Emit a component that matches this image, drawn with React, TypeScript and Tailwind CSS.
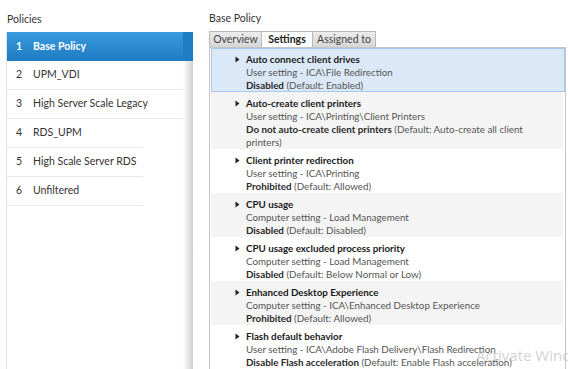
import React from 'react';

interface Policy {
    num: number;
    name: string;
}

interface Setting {
    title: string;
    path: string;
    value: string;
    def: string;
}

const policies: Policy[] = [
    { num: 1, name: 'Base Policy' },
    { num: 2, name: 'UPM_VDI' },
    { num: 3, name: 'High Server Scale Legacy' },
    { num: 4, name: 'RDS_UPM' },
    { num: 5, name: 'High Scale Server RDS' },
    { num: 6, name: 'Unfiltered' },
];

const settings: Setting[] = [
    { title: 'Auto connect client drives', path: 'User setting - ICA\\File Redirection', value: 'Disabled', def: '(Default: Enabled)' },
    { title: 'Auto-create client printers', path: 'User setting - ICA\\Printing\\Client Printers', value: 'Do not auto-create client printers', def: '(Default: Auto-create all client printers)' },
    { title: 'Client printer redirection', path: 'User setting - ICA\\Printing', value: 'Prohibited', def: '(Default: Allowed)' },
    { title: 'CPU usage', path: 'Computer setting - Load Management', value: 'Disabled', def: '(Default: Disabled)' },
    { title: 'CPU usage excluded process priority', path: 'Computer setting - Load Management', value: 'Disabled', def: '(Default: Below Normal or Low)' },
    { title: 'Enhanced Desktop Experience', path: 'Computer setting - ICA\\Enhanced Desktop Experience', value: 'Prohibited', def: '(Default: Allowed)' },
    { title: 'Flash default behavior', path: 'User setting - ICA\\Adobe Flash Delivery\\Flash Redirection', value: 'Disable Flash acceleration', def: '(Default: Enable Flash acceleration)' },
];

// Small black expander arrow
const Arrow: React.FC = () => (
    <svg width="5" height="7" viewBox="0 0 5 7" className="mt-[3px] shrink-0">
        <path d="M0.5 0.5 L4.5 3.5 L0.5 6.5 Z" fill="#222" />
    </svg>
);

const SettingRow: React.FC<{ s: Setting; index: number }> = ({ s, index }) => {
    const selected = index === 0;
    const rowClass = selected
        ? 'bg-[#dae8f8] border border-[#a8c9ec] pl-[23px] pt-[4px] pb-[0px] h-[44px]'
        : index % 2 === 1
            ? 'bg-[#f4f4f4] pl-[24px] pt-[5px] mr-[2px]'
            : 'bg-white pl-[24px] pt-[5px] mr-[2px]';
    return (
        <div className={`flex gap-[6px] ${rowClass}`}>
            <Arrow />
            <div className="w-[282px] leading-[13px]">
                <div className="font-bold text-[#1a1a1a]">{s.title}</div>
                <div className="text-[#555]">{s.path}</div>
                <div className="text-[#555]">
                    <span className="font-bold text-[#2a2a2a]">{s.value}</span> {s.def}
                </div>
            </div>
        </div>
    );
};

const App: React.FC = () => {
    return (
        <div
            className="relative w-[568px] h-[369px] overflow-hidden bg-white flex text-[10.5px] text-[#333]"
            style={{ fontFamily: 'Lato, "Noto Sans", sans-serif' }}
        >
            {/* Left column: policies list */}
            <div className="w-[193px] pl-[6px] flex flex-col shrink-0">
                <div className="h-[32px] pt-[13px] pl-[1px] leading-[13px] text-[#333]">Policies</div>
                <div className="flex-1 flex border-l border-[#e2e2e2]">
                    <div className="flex-1 flex flex-col">
                        {policies.map((p, i) => (
                            <div
                                key={p.num}
                                className={`h-[29px] flex items-center ${
                                    i === 0
                                        ? 'bg-gradient-to-b from-[#3a9be0] to-[#1d7bc2] text-white font-bold'
                                        : i < 3
                                            ? 'border-b border-[#e8e8e8] text-[#333]'
                                            : 'border-b border-[#e8e8e8] mr-[40px] text-[#333]'
                                }`}
                            >
                                <span className="w-[17px] pl-[9px] box-content">{p.num}</span>
                                <span>{p.name}</span>
                            </div>
                        ))}
                    </div>
                    <div className="w-[10px] flex flex-col">
                        <div className="h-[29px] bg-[#1f7dc4]" />
                        <div className="flex-1 bg-gradient-to-r from-white to-[#cfcfd8]" />
                    </div>
                </div>
            </div>

            {/* Right column: policy details */}
            <div className="flex-1 pl-[16px] flex flex-col">
                <div className="h-[32px] pt-[12px] leading-[13px] text-[#333]">Base Policy</div>
                <div className="flex h-[16px] items-end">
                    <div className="h-[16px] w-[53px] flex items-center justify-center border border-b-0 border-[#b9b9b9] bg-gradient-to-b from-[#ececec] to-[#d6d6d6] text-[#444]">
                        Overview
                    </div>
                    <div className="h-[16px] w-[50px] flex items-center justify-center border-t border-[#b9b9b9] bg-white font-bold text-[#222]">
                        Settings
                    </div>
                    <div className="h-[16px] w-[64px] flex items-center justify-center border border-b-0 border-[#b9b9b9] bg-gradient-to-b from-[#ececec] to-[#d6d6d6] text-[#444]">
                        Assigned to
                    </div>
                </div>
                <div className="flex-1 w-[357px] border-l border-r border-t border-[#c4c4c4] pl-[1px] flex flex-col text-[9.8px]">
                    {settings.map((s, i) => (
                        <SettingRow key={s.title} s={s} index={i} />
                    ))}
                </div>
            </div>

            {/* Windows activation watermark */}
            <div className="absolute left-[476px] top-[344px] text-[15px] text-[#b4b4b4]/60 whitespace-nowrap pointer-events-none" style={{ fontFamily: '"Open Sans", sans-serif' }}>
                Activate Windows
            </div>
        </div>
    );
};

export default App;
